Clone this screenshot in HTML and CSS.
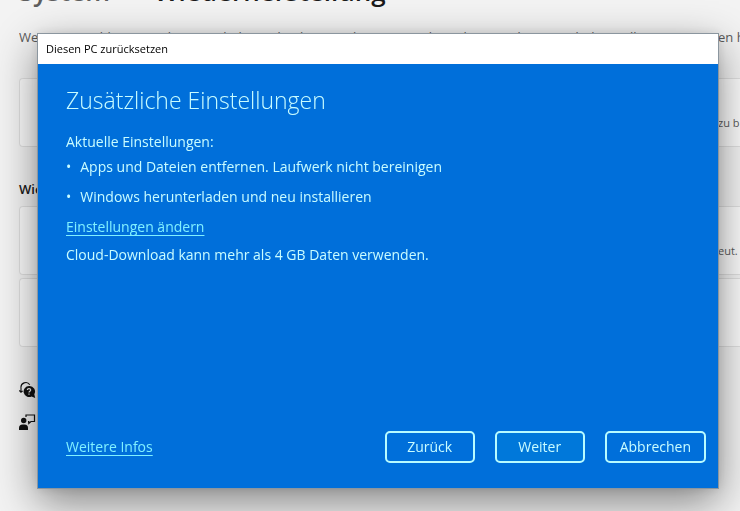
FILE: index.html
```html
<!DOCTYPE html>
<html lang="de">
<head>
<meta charset="utf-8">
<meta name="viewport" content="width=device-width, initial-scale=1">
<title>Diesen PC zurücksetzen</title>
<link rel="stylesheet" href="styles.css">
</head>
<body>
<main class="settings">
  <h1 class="crumbs"><span class="crumb-parent">System</span><span class="crumb-current">Wiederherstellung</span></h1>
  <p class="intro"><span class="intro-start">Wenn Sie Probleme mit Ihrem PC haben oder ihn zurücksetzen möchten, können diese Wiederherstellungsoption</span><span class="intro-end">en h</span></p>
  <section class="card card-notice"><p class="card-text">zu b</p></section>
  <h2 class="section-title">Wie</h2>
  <section class="card"><p class="card-text">eut.</p></section>
  <section class="card"></section>
  <div class="help">
    <svg class="help-icon" viewBox="0 0 18 18" aria-hidden="true">
      <path d="M2 11V7a4.800 4.800 0 0 1 8.800-3.200M.3 9.400l1.700 1.800 1.700-1.400" fill="none" stroke="#111" stroke-width="1.1"/>
      <path d="M10 5a5.500 5.500 0 1 0 2.600 10.400l3.600 1.600-.9-3.800A5.500 5.500 0 0 0 10 5z" fill="#111"/>
      <path d="M8.300 9c.1-2 3.400-1.900 3.400.1 0 1.200-1.700 1.100-1.700 2.500M10 12.500v1.200" fill="none" stroke="#eee" stroke-width="1.2"/>
    </svg>
    <svg class="help-icon" viewBox="0 0 18 18" aria-hidden="true">
      <circle cx="4.700" cy="7.500" r="2.700" fill="#111"/>
      <path d="M0 17v-2a3.500 3.500 0 0 1 3.500-3.500h2A3.500 3.500 0 0 1 9 15v2z" fill="#111"/>
      <path d="M7 4V2h8.500v6.500H12L9.800 10.500v-2H9" fill="none" stroke="#111" stroke-width="1.2"/>
    </svg>
  </div>
</main>

<div class="dialog" role="dialog" aria-labelledby="dialog-title">
  <header class="titlebar" id="dialog-title">Diesen PC zurücksetzen</header>
  <div class="content">
    <h2 class="heading">Zusätzliche Einstellungen</h2>
    <p class="line">Aktuelle Einstellungen:</p>
    <ul class="choices">
      <li>Apps und Dateien entfernen. Laufwerk nicht bereinigen</li>
      <li>Windows herunterladen und neu installieren</li>
    </ul>
    <p class="line line-link"><a class="link" href="#">Einstellungen ändern</a></p>
    <p class="line">Cloud-Download kann mehr als 4 GB Daten verwenden.</p>
  </div>
  <footer class="footer">
    <a class="link" href="#">Weitere Infos</a>
    <div class="actions">
      <button class="button" type="button">Zurück</button>
      <button class="button button-default" type="button">Weiter</button>
      <button class="button" type="button">Abbrechen</button>
    </div>
  </footer>
</div>
</body>
</html>
```
FILE: styles.css
```css
* {
  box-sizing: border-box;
}

body {
  margin: 0;
  min-height: 100vh;
  overflow: hidden;
  background: #f3f3f3;
  color: #1a1a1a;
  font-family: "Open Sans", "Noto Sans", sans-serif;
}

h1, h2, p, ul {
  margin: 0;
}

.settings {
  padding-left: 19px;
}

.crumbs {
  display: flex;
  gap: 44px;
  margin-top: -27px;
  font-size: 26px;
  line-height: 36px;
  font-weight: 600;
}

.crumb-parent {
  color: #5f5f5f;
}

.intro {
  display: flex;
  margin-top: 18px;
  color: #5c5c5c;
  font-size: 13px;
  line-height: 20px;
  white-space: nowrap;
}

.intro-start {
  flex: 1;
  min-width: 0;
  overflow: hidden;
}

.intro-end {
  width: 22px;
}

.card {
  display: flex;
  justify-content: flex-end;
  height: 69px;
  margin-bottom: 3px;
  padding-top: 34px;
  border: 1px solid #e0e0e0;
  border-right: 0;
  border-radius: 4px 0 0 4px;
  background: #fbfbfb;
}

.card-notice {
  margin-top: 31px;
}

.card-text {
  width: 22px;
  color: #5c5c5c;
  font-size: 11px;
  line-height: 20px;
  white-space: nowrap;
}

.section-title {
  margin: 32px 0 7px;
  font-size: 13px;
  line-height: 20px;
  font-weight: 600;
}

.help {
  display: flex;
  flex-direction: column;
  gap: 14px;
  margin-top: 34px;
}

.help-icon {
  width: 18px;
  height: 18px;
}

.dialog {
  position: fixed;
  inset: 33px 21px 22px 37px;
  display: flex;
  flex-direction: column;
  border: 1px solid #8b969f;
  background: #006fda;
  color: #c8fcff;
  font-size: 14px;
  line-height: 20px;
  box-shadow: 0 14px 40px rgba(0, 0, 0, 0.45), 0 0 10px rgba(0, 0, 0, 0.1);
}

.titlebar {
  padding: 0 8px;
  background: #fff;
  color: #000;
  font-size: 11px;
  line-height: 30px;
}

.content {
  flex: 1;
  padding: 20px 28px;
}

.heading {
  margin-bottom: 16px;
  font-size: 23px;
  line-height: 32px;
  font-weight: 300;
}

.choices {
  padding: 0;
  list-style: none;
}

.choices li {
  display: flex;
  gap: 9px;
  line-height: 30px;
}

.choices li::before {
  content: "•";
}

.line-link {
  margin: 5px 0 8px;
}

.link {
  color: #80f0ff;
  text-decoration: underline;
  text-underline-offset: 3px;
}

.footer {
  display: flex;
  align-items: center;
  justify-content: space-between;
  padding: 0 12px 25px 28px;
}

.actions {
  display: flex;
  gap: 20px;
}

.button {
  min-width: 90px;
  height: 32px;
  padding: 0 13px;
  border: 2px solid #b8fbff;
  border-radius: 5px;
  background: transparent;
  color: inherit;
  font: inherit;
}

.button-default {
  background: #0078da;
}
```
